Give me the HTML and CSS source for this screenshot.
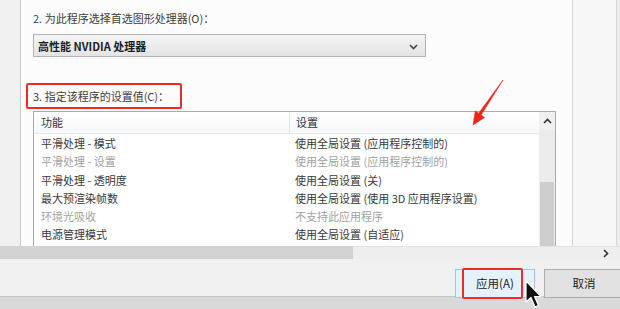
FILE: index.html
```html
<!DOCTYPE html>
<html lang="zh-CN">
<head>
  <meta charset="UTF-8">
  <title>NVIDIA 程序设置</title>
  <link rel="stylesheet" href="styles.css">
</head>
<body>
  <div class="window">
    <div class="main">
      <div class="gutter"></div>

      <div class="panel">
        <div class="label">2. 为此程序选择首选图形处理器(O)：</div>
        <div class="select">
          <span>高性能 NVIDIA 处理器</span>
          <svg class="chevron" width="9" height="6" viewBox="0 0 9 6">
            <path d="M1 1 L4.5 4.5 L8 1" fill="none" stroke="#444" stroke-width="1.6"/>
          </svg>
        </div>

        <div class="label label-marked">3. 指定该程序的设置值(C)：</div>

        <div class="table">
          <div class="grid">
            <div class="row head">
              <div class="cell col-feature">功能</div>
              <div class="cell col-setting">设置</div>
            </div>
            <div class="row">
              <div class="cell col-feature">平滑处理 - 模式</div>
              <div class="cell col-setting">使用全局设置 (应用程序控制的)</div>
            </div>
            <div class="row disabled">
              <div class="cell col-feature">平滑处理 - 设置</div>
              <div class="cell col-setting">使用全局设置 (应用程序控制的)</div>
            </div>
            <div class="row">
              <div class="cell col-feature">平滑处理 - 透明度</div>
              <div class="cell col-setting">使用全局设置 (关)</div>
            </div>
            <div class="row">
              <div class="cell col-feature">最大预渲染帧数</div>
              <div class="cell col-setting">使用全局设置 (使用 3D 应用程序设置)</div>
            </div>
            <div class="row disabled">
              <div class="cell col-feature">环境光吸收</div>
              <div class="cell col-setting">不支持此应用程序</div>
            </div>
            <div class="row">
              <div class="cell col-feature">电源管理模式</div>
              <div class="cell col-setting">使用全局设置 (自适应)</div>
            </div>
          </div>
          <div class="vscroll">
            <div class="vscroll-btn">
              <svg width="9" height="6" viewBox="0 0 9 6">
                <path d="M1 5 L4.5 1.5 L8 5" fill="none" stroke="#333" stroke-width="1.6"/>
              </svg>
            </div>
            <div class="vscroll-track"></div>
            <div class="vscroll-thumb"></div>
          </div>
        </div>
      </div>

      <div class="side"></div>
      <div class="edge"></div>
    </div>

    <div class="hscroll">
      <div class="hscroll-thumb"></div>
      <div class="hscroll-track">
        <svg width="6" height="9" viewBox="0 0 6 9">
          <path d="M1 1 L4.5 4.5 L1 8" fill="none" stroke="#333" stroke-width="1.6"/>
        </svg>
      </div>
    </div>

    <div class="footer">
      <div class="buttons">
        <div class="button button-default">
          应用(A)
          <span class="mark"></span>
        </div>
        <div class="button">取消</div>
      </div>
      <div class="band"></div>
    </div>

    <!-- annotation arrow -->
    <svg class="arrow" width="620" height="309" viewBox="0 0 620 309">
      <polygon points="503,80 481.1,115.1 484.6,117.6 473,125 475.3,111 478.7,113.3"
               fill="#f0231b" stroke="#f0231b" stroke-width="0.6" stroke-linejoin="round"/>
    </svg>

    <!-- mouse pointer -->
    <svg class="cursor" width="18" height="30" viewBox="0 0 18 30">
      <path d="M1 1 L1 22 L6 17.5 L10 27 L13.5 25.5 L9.5 16.5 L16 16.5 Z"
            fill="#111" stroke="#fff" stroke-width="1.2" stroke-linejoin="round"/>
    </svg>
  </div>
</body>
</html>
```

FILE: styles.css
```css
body {
  margin: 0;
  font-family: "Noto Sans CJK SC", "Microsoft YaHei", sans-serif;
  font-size: 11px;
  color: #3a3a3a;
  background: #f0f0f0;
}

.window {
  position: relative;
  width: 620px;
  height: 309px;
  overflow: hidden;
}

/* Top area */
.main {
  display: flex;
  height: 246px;
  overflow: hidden;
}

.gutter {
  width: 20px;
  background: #f0f0f0;
}

.panel {
  width: 539px;
  padding: 10px 0 0 12px;
  background: #fcfcfc;
  border-left: 1px solid #cacaca;
}

.side {
  width: 43px;
  background: #f7f7f7;
  border-left: 1px solid #d4d4d4;
  border-right: 1px solid #d9d9d9;
}

.edge {
  flex: 1;
  background: #ededed;
}

.label {
  height: 16px;
  line-height: 16px;
  color: #404040;
}

.select {
  display: flex;
  align-items: center;
  justify-content: space-between;
  width: 380px;
  height: 21px;
  margin-top: 8px;
  padding: 0 7px 0 4px;
  background: linear-gradient(#f4f4f4, #e4e4e4);
  border: 1px solid #b2b2b2;
  font-weight: bold;
  color: #1e1e1e;
}

.chevron {
  display: block;
  margin-top: 2px;
}

.label-marked {
  display: inline-block;
  margin: 26px 0 0 -7px;
  padding: 3px 11px 3px 5px;
  border: 2px solid #ee2a22;
  border-radius: 2px;
}

/* Settings list */
.table {
  display: flex;
  width: 521px;
  height: 260px;
  margin-top: 2px;
  border: 1px solid #ababab;
  background: #fff;
}

.grid {
  flex: 1;
}

.row {
  display: flex;
  height: 18.3px;
  line-height: 18.3px;
  white-space: nowrap;
}

.row.head {
  height: 21px;
  line-height: 21px;
  background: linear-gradient(#fff, #f7f8fa);
  border-bottom: 1px solid #e8eaee;
  color: #333;
}

.row.disabled {
  color: #a2a2a2;
}

.cell {
  overflow: hidden;
}

.col-feature {
  width: 248px;
  padding-left: 7px;
}

.col-setting {
  flex: 1;
  padding-left: 6px;
}

.head .col-feature {
  border-right: 1px solid #e6e6e6;
}

.vscroll {
  display: flex;
  flex-direction: column;
  width: 16px;
  background: #f0f0f0;
}

.vscroll-btn {
  display: flex;
  align-items: center;
  justify-content: center;
  height: 18px;
}

.vscroll-track {
  height: 52px;
  background: #ececec;
}

.vscroll-thumb {
  flex: 1;
  margin: 0 1px;
  background: #cdcdcd;
}

/* Horizontal scrollbar */
.hscroll {
  display: flex;
  height: 13px;
}

.hscroll-thumb {
  width: 353px;
  background: #d2d2d2;
}

.hscroll-track {
  display: flex;
  align-items: center;
  justify-content: flex-end;
  flex: 1;
  padding-right: 11px;
  background: #eeeeee;
  border-top: 1px solid #e2e2e2;
}

/* Footer */
.footer {
  height: 50px;
  background: #f0f0f0;
}

.buttons {
  display: flex;
  justify-content: flex-end;
  gap: 9px;
  height: 27px;
  margin-right: -4px;
  padding-top: 10px;
}

.button {
  position: relative;
  width: 78px;
  height: 27px;
  line-height: 27px;
  text-align: center;
  font-size: 11.5px;
  color: #222;
  background: #e1e1e1;
  border: 1px solid #adadad;
}

.button-default {
  background: #e5f1fb;
  border-color: #9fc4ec;
}

.mark {
  position: absolute;
  left: 6px;
  top: -2px;
  width: 57px;
  height: 27px;
  border: 2px solid #ee2a22;
  border-radius: 2px;
}

.band {
  height: 12px;
  background: #d9d9d9;
  border-top: 1px solid #c4c4c4;
}

/* Overlays */
.arrow {
  position: absolute;
  left: 0;
  top: 0;
  pointer-events: none;
}

.cursor {
  position: absolute;
  left: 525px;
  top: 280px;
}
```
